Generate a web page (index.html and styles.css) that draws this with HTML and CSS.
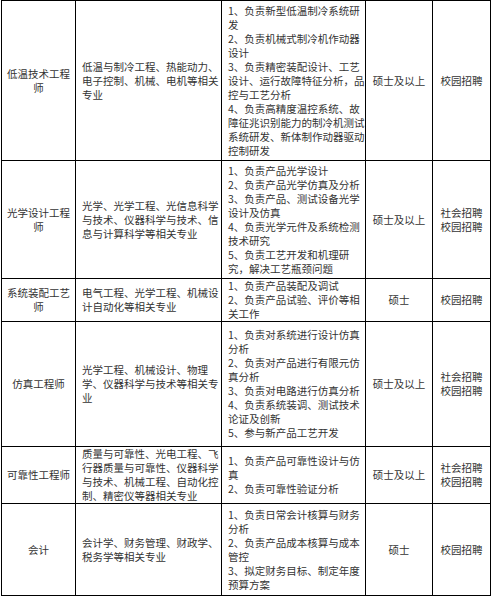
FILE: index.html
```html
<!DOCTYPE html>
<html lang="zh">
<head>
<meta charset="utf-8">
<title>招聘岗位</title>
<link rel="stylesheet" href="styles.css">
</head>
<body>
<table class="jobs">
  <colgroup>
    <col class="c-pos"><col class="c-major"><col class="c-duty"><col class="c-deg"><col class="c-type">
  </colgroup>
  <tr class="r1">
    <td class="pos">低温技术工程师</td>
    <td class="major">低温与制冷工程、热能动力、电子控制、机械、电机等相关专业</td>
    <td class="duty">
      <p>1、负责新型低温制冷系统研发</p>
      <p>2、负责机械式制冷机作动器设计</p>
      <p>3、负责精密装配设计、工艺设计、运行故障特征分析，品控与工艺分析</p>
      <p>4、负责高精度温控系统、故障征兆识别能力的制冷机测试系统研发、新体制作动器驱动控制研发</p>
    </td>
    <td class="deg">硕士及以上</td>
    <td class="type">校园招聘</td>
  </tr>
  <tr class="r2">
    <td class="pos">光学设计工程师</td>
    <td class="major">光学、光学工程、光信息科学与技术、仪器科学与技术、信息与计算科学等相关专业</td>
    <td class="duty">
      <p>1、负责产品光学设计</p>
      <p>2、负责产品光学仿真及分析</p>
      <p>3、负责产品、测试设备光学设计及仿真</p>
      <p>4、负责光学元件及系统检测技术研究</p>
      <p>5、负责工艺开发和机理研究，解决工艺瓶颈问题</p>
    </td>
    <td class="deg">硕士及以上</td>
    <td class="type">社会招聘<br>校园招聘</td>
  </tr>
  <tr class="r3">
    <td class="pos">系统装配工艺师</td>
    <td class="major">电气工程、光学工程、机械设计自动化等相关专业</td>
    <td class="duty">
      <p>1、负责产品装配及调试</p>
      <p>2、负责产品试验、评价等相关工作</p>
    </td>
    <td class="deg">硕士</td>
    <td class="type">校园招聘</td>
  </tr>
  <tr class="r4">
    <td class="pos">仿真工程师</td>
    <td class="major">光学工程、机械设计、物理学、仪器科学与技术等相关专业</td>
    <td class="duty">
      <p>1、负责对系统进行设计仿真分析</p>
      <p>2、负责对产品进行有限元仿真分析</p>
      <p>3、负责对电路进行仿真分析</p>
      <p>4、负责系统装调、测试技术论证及创新</p>
      <p>5、参与新产品工艺开发</p>
    </td>
    <td class="deg">硕士及以上</td>
    <td class="type">社会招聘<br>校园招聘</td>
  </tr>
  <tr class="r5">
    <td class="pos">可靠性工程师</td>
    <td class="major">质量与可靠性、光电工程、飞行器质量与可靠性、仪器科学与技术、机械工程、自动化控制、精密仪等器相关专业</td>
    <td class="duty">
      <p>1、负责产品可靠性设计与仿真</p>
      <p>2、负责可靠性验证分析</p>
    </td>
    <td class="deg">硕士及以上</td>
    <td class="type">社会招聘<br>校园招聘</td>
  </tr>
  <tr class="r6">
    <td class="pos">会计</td>
    <td class="major">会计学、财务管理、财政学、税务学等相关专业</td>
    <td class="duty">
      <p>1、负责日常会计核算与财务分析</p>
      <p>2、负责产品成本核算与成本管控</p>
      <p>3、拟定财务目标、制定年度预算方案</p>
    </td>
    <td class="deg">硕士</td>
    <td class="type">校园招聘</td>
  </tr>
</table>
</body>
</html>
```
FILE: styles.css
```css
html, body {
  margin: 0;
  padding: 0;
  background: #ffffff;
}

.jobs {
  margin: 0 0 0 1px;
  border-collapse: collapse;
  table-layout: fixed;
  width: 489px;
  font-family: "Noto Sans CJK SC", "Noto Sans", sans-serif;
  font-size: 10.5px;
  line-height: 14px;
  color: #333333;
  line-break: strict;
}

.c-pos { width: 74px; }
.c-major { width: 146px; }
.c-duty { width: 144px; }
.c-deg { width: 67px; }
.c-type { width: 58px; }

.jobs td {
  border: 1px solid #000000;
  vertical-align: middle;
  padding: 0;
}

.pos {
  text-align: center;
  padding: 0 4px !important;
}

.major {
  padding: 0 2px 0 6px !important;
}

.duty {
  padding: 0 0 0 6px !important;
}

.duty p {
  margin: 0;
}

.deg, .type {
  text-align: center;
}

.r1 { height: 160px; }
.r2 { height: 118px; }
.r3 { height: 43px; }
.r4 { height: 125px; }
.r5 { height: 57px; }
.r6 { height: 92px; }
```
